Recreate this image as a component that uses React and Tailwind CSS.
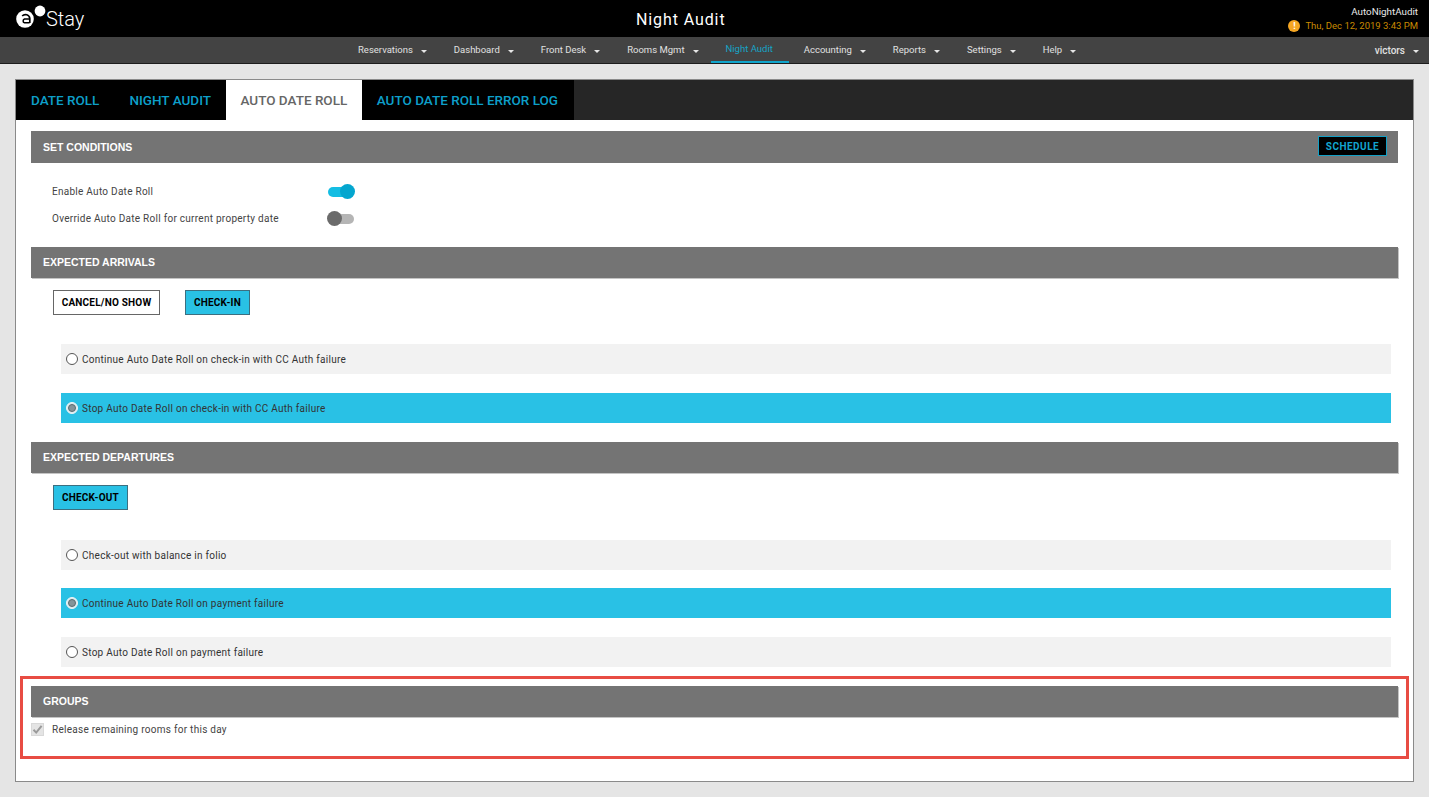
const FONT = "font-['Roboto','Liberation_Sans',sans-serif]";

const navItems = [
  { label: 'Reservations', caret: true },
  { label: 'Dashboard', caret: true },
  { label: 'Front Desk', caret: true },
  { label: 'Rooms Mgmt', caret: true },
  { label: 'Night Audit', active: true },
  { label: 'Accounting', caret: true },
  { label: 'Reports', caret: true },
  { label: 'Settings', caret: true },
  { label: 'Help', caret: true },
];

function Caret() {
  return <span className="ml-[8px] inline-block w-0 h-0 border-x-[3.5px] border-x-transparent border-t-[3.5px] border-t-[#e6e6e6] translate-y-[1px]" />;
}

function Logo() {
  return (
    <div className="flex items-center ml-[15px]">
      <svg width="31" height="30" viewBox="0 0 31 30" className="-mt-[4px]">
        <circle cx="10" cy="17" r="8.8" fill="#fff" />
        <path d="M7.2 14A4.4 4.4 0 0 1 14.8 16.5V21" fill="none" stroke="#000" strokeWidth="1.7" />
        <path d="M14.6 17H9.5A2 2 0 0 0 9.5 20.8H14.6" fill="none" stroke="#000" strokeWidth="1.5" />
        <circle cx="25" cy="9" r="5.4" fill="#fff" />
      </svg>
      <span className="text-[20px] leading-[24px] font-light text-white mt-[1px]">Stay</span>
    </div>
  );
}

function SectionHeader({ title, tall, low, children }) {
  return (
    <div className={`flex items-center justify-between ${tall ? 'h-[32px]' : 'h-[31px] shadow-[1px_1px_0_#c4c4c4]'} ml-[15px] mr-[15px] bg-[#747474] pl-[12px] pr-[11px]`}>
      <span className={`${low ? 'mt-[1px]' : ''} text-[10.5px] font-bold text-white font-['Liberation_Sans',sans-serif]`}>{title}</span>
      {children}
    </div>
  );
}

function RadioRow({ label, selected, className = '' }) {
  return (
    <div className={`flex items-center h-[30px] ml-[45px] mr-[22px] pl-[5px] ${selected ? 'bg-[#29c1e5]' : 'bg-[#f2f2f2]'} ${className}`}>
      <span className={`flex items-center justify-center w-[12px] h-[12px] rounded-full border ${selected ? 'border-[#eef4f6] bg-[#dcebef]' : 'border-[#555] bg-white'}`}>
        {selected && <span className="w-[8px] h-[8px] rounded-full bg-[#84949a] border border-[#5c6b70]" />}
      </span>
      <span className="ml-[4px] text-[10px] tracking-[0.27px] text-[#333]">{label}</span>
    </div>
  );
}

function ActionButton({ label, active, className = '' }) {
  return (
    <button className={`h-[25px] border text-[10px] font-bold tracking-[0.2px] text-black ${active ? 'bg-[#29c1e5] border-[#3c6f80]' : 'bg-white border-[#666]'} ${className}`}>
      {label}
    </button>
  );
}

function Toggle({ on }) {
  return (
    <div className={`relative w-[26px] h-[10px] rounded-full ${on ? 'bg-[#14bde3]' : 'bg-[#b5b5b5]'}`}>
      <span className={`absolute top-[-2.5px] w-[15px] h-[15px] rounded-full ${on ? 'right-[-1px] bg-[#04a6cf]' : 'left-[-1px] bg-[#6b6b6b]'}`} />
    </div>
  );
}

export default function App() {
  return (
    <div className={`relative w-[1429px] h-[797px] overflow-hidden bg-[#e5e5e5] ${FONT}`}>
      {/* top bar */}
      <div className="relative flex items-center justify-between h-[37px] bg-black text-white">
        <Logo />
        <div className="absolute left-[636px] top-[9px] text-[16px] leading-[21px] tracking-[0.9px]">Night Audit</div>
        <div className="pr-[11px] text-right">
          <div className="text-[9.8px] leading-[12px] mt-[2px] text-[#e8e8e8]">AutoNightAudit</div>
          <div className="flex items-center justify-end mt-[1px] text-[9.5px] leading-[14px] text-[#c98a00]">
            <span className="flex items-center justify-center w-[12px] h-[12px] mr-[5px] rounded-full bg-[#f5a623] text-white text-[9px] font-bold">!</span>
            Thu, Dec 12, 2019 3:43 PM
          </div>
        </div>
      </div>

      {/* nav */}
      <div className="relative flex h-[27px] bg-[#434343] border-b border-[#1c1c1c] pl-[343px]">
        {navItems.map((item) => (
          <div
            key={item.label}
            className={`flex items-center h-[26px] pt-[1px] text-[9.5px] ${item.active ? 'pl-[15px] pr-[16px] text-[#16a3c6] border-b-2 border-[#10a5cc]' : 'pl-[15px] pr-[12px] text-[#e0e0e0]'}`}
          >
            {item.label}
            {item.caret && <Caret />}
          </div>
        ))}
        <div className="absolute right-[10px] top-0 flex items-center h-[26px] pt-[1px] text-[10px] font-medium text-[#e0e0e0]">
          victors
          <Caret />
        </div>
      </div>

      {/* card */}
      <div className="mt-[15px] mx-[15px] h-[703px] border border-[#8a8a8a] bg-white">
        <div className="flex h-[40px] bg-[#262626]">
          <div className="flex bg-black">
            <div className="flex items-center px-[15px] text-[13.5px] font-medium text-[#0d9fc9]">DATE ROLL</div>
            <div className="flex items-center px-[15px] text-[13.5px] font-medium text-[#0d9fc9]">NIGHT AUDIT</div>
            <div className="flex items-center px-[14.5px] bg-white text-[13.5px] font-medium text-[#666]">AUTO DATE ROLL</div>
            <div className="flex items-center pl-[15px] pr-[16px] text-[13.5px] font-medium text-[#0d9fc9]">AUTO DATE ROLL ERROR LOG</div>
          </div>
        </div>

        <div className="pt-[11px]">
          <SectionHeader title="SET CONDITIONS" tall low>
            <button className="mb-[2px] w-[69px] h-[20px] bg-black border border-[#12a0c6] text-[10px] font-bold tracking-[0.5px] text-[#12a5cf]">SCHEDULE</button>
          </SectionHeader>

          <div className="flex items-center h-[27px] mt-[15px] pl-[36px]">
            <span className="w-[276px] text-[10px] tracking-[0.27px] text-[#444]">Enable Auto Date Roll</span>
            <Toggle on />
          </div>
          <div className="flex items-center h-[27px] pl-[36px]">
            <span className="w-[276px] text-[10px] tracking-[0.27px] text-[#444]">Override Auto Date Roll for current property date</span>
            <Toggle />
          </div>

          <div className="mt-[15px]">
            <SectionHeader title="EXPECTED ARRIVALS" />
          </div>
          <div className="flex gap-[25px] mt-[12px] ml-[37px]">
            <ActionButton label="CANCEL/NO SHOW" className="w-[107px]" />
            <ActionButton label="CHECK-IN" active className="w-[65px]" />
          </div>
          <RadioRow label="Continue Auto Date Roll on check-in with CC Auth failure" className="mt-[29px]" />
          <RadioRow label="Stop Auto Date Roll on check-in with CC Auth failure" selected className="mt-[19px]" />

          <div className="mt-[19px]">
            <SectionHeader title="EXPECTED DEPARTURES" />
          </div>
          <div className="flex mt-[12px] ml-[37px]">
            <ActionButton label="CHECK-OUT" active className="w-[75px]" />
          </div>
          <RadioRow label="Check-out with balance in folio" className="mt-[30px]" />
          <RadioRow label="Continue Auto Date Roll on payment failure" selected className="mt-[18px]" />
          <RadioRow label="Stop Auto Date Roll on payment failure" className="mt-[19px]" />

          <div className="mt-[19px]">
            <SectionHeader title="GROUPS" low />
          </div>
          <div className="flex items-center mt-[5px] ml-[15px]">
            <span className="flex items-center justify-center w-[13px] h-[13px] bg-[#e4e4e4] border border-[#d8d8d8]">
              <svg width="11" height="11" viewBox="0 0 11 11"><path d="M1.5 5.8 4.2 8.6 9.6 1.8" fill="none" stroke="#9a9a9a" strokeWidth="2" /></svg>
            </span>
            <span className="ml-[8px] text-[10px] tracking-[0.27px] text-[#444]">Release remaining rooms for this day</span>
          </div>
        </div>
      </div>

      {/* red highlight over the groups section */}
      <div className="absolute left-[20px] top-[676px] w-[1389px] h-[83px] border-[3px] border-[#e84c43] pointer-events-none" />
    </div>
  );
}
